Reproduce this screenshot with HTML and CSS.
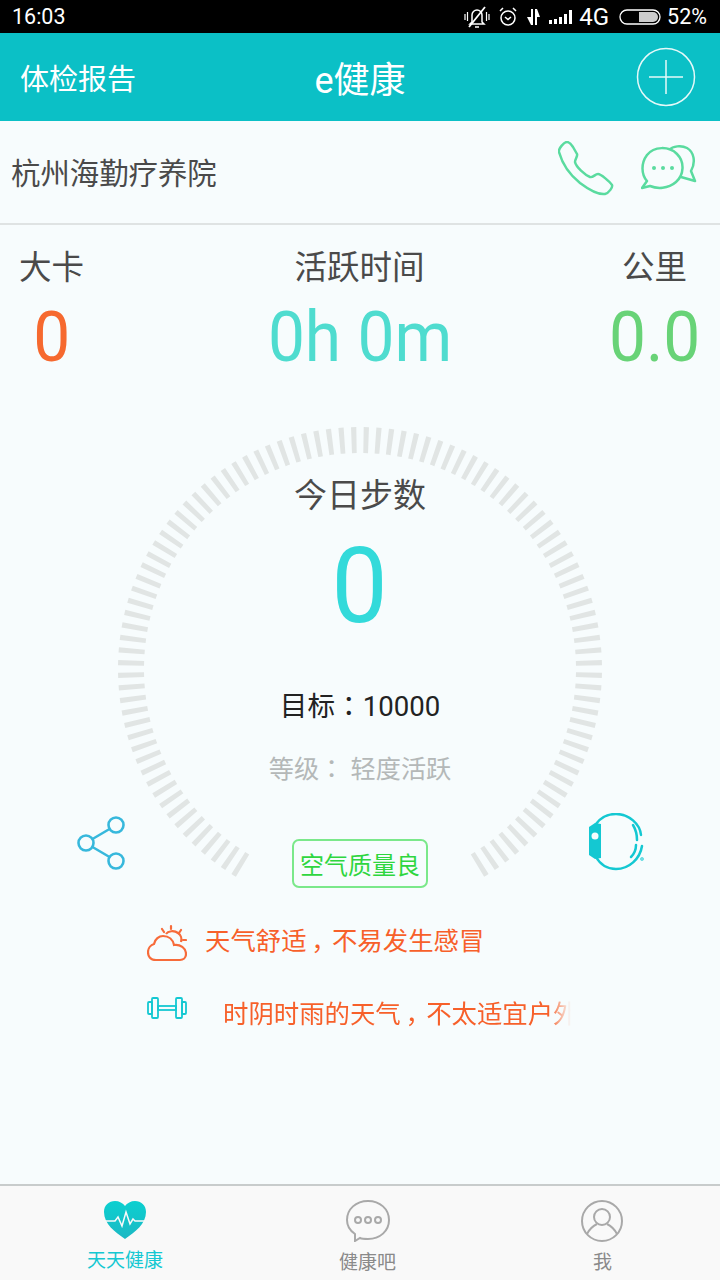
FILE: index.html
```html
<!DOCTYPE html>
<html lang="zh-CN">
<head>
    <meta charset="UTF-8">
    <meta name="viewport" content="width=device-width, initial-scale=1.0">
    <title>e健康</title>
    <link rel="stylesheet" href="styles.css">
</head>

<body>
    <div class="status-bar">
        <span class="status-time">16:03</span>
        <div class="status-right">
            <svg width="26" height="24" viewBox="0 0 26 24" fill="none" stroke="#fff" stroke-width="1.5">
                <path d="M8 17V10a5 5 0 0 1 10 0v7l2 2H6z"/>
                <path d="M11 22h4"/>
                <path d="M21 2L5 22" stroke-width="1.8"/>
                <path d="M1 9v6M3.500 7v9M25 9v6M22.500 7v9" stroke-width="1.2"/>
            </svg>
            <svg width="20" height="22" viewBox="0 0 20 22" fill="none" stroke="#fff" stroke-width="1.5">
                <circle cx="10" cy="12" r="7"/>
                <path d="M7 11l3 2.500 3-2.500"/>
                <path d="M2 5l3-3M18 5l-3-3"/>
            </svg>
            <svg width="15" height="18" viewBox="0 0 15 18" fill="#fff">
                <path d="M5 1h2v16H5L1 9h4z"/>
                <path d="M9 17h2V9h3L11 1H9z"/>
            </svg>
            <svg width="24" height="16" viewBox="0 0 24 16" fill="#fff">
                <rect x="0" y="11" width="3" height="4"/>
                <rect x="5" y="10" width="3" height="5"/>
                <rect x="10" y="8" width="3" height="7"/>
                <rect x="15" y="5" width="3" height="10"/>
                <rect x="20" y="1" width="3" height="14"/>
            </svg>
            <span class="status-net">4G</span>
            <svg class="battery" width="42" height="16" viewBox="0 0 42 16" fill="none">
                <rect x="1" y="1" width="40" height="14" rx="7" stroke="#fff" stroke-width="1.3"/>
                <path d="M20 3h14a5 5 0 0 1 0 10H20z" fill="#ccc"/>
            </svg>
            <span class="status-pct">52%</span>
        </div>
    </div>

    <div class="header">
        <span class="header-left">体检报告</span>
        <span class="header-title">e健康</span>
        <svg class="header-add" width="60" height="60" viewBox="0 0 60 60" fill="none" stroke="#e6f9f9" stroke-width="1.5">
            <circle cx="30" cy="30" r="28.500"/>
            <path d="M30 13v34M13 30h34"/>
        </svg>
    </div>

    <div class="org-row">
        <span class="org-name">杭州海勤疗养院</span>
        <div class="org-actions">
            <svg width="56" height="55" viewBox="0 0 56 55" fill="none" stroke="#5adb9f" stroke-width="2.500" stroke-linejoin="round">
                <path d="M1 11C0 8 6 1 9 1c2 0 4 2 6 5l4 7c1 2-2 5-2 8 1 5 10 13 15 15 3 1 5-3 8-3s12 8 14 11c1 2-3 8-7 9-7 1-17-5-25-11C12 34 4 22 1 11z"/>
            </svg>
            <svg width="56" height="46" viewBox="0 0 56 46" fill="none" stroke="#5adb9f" stroke-width="2.500" stroke-linejoin="round">
                <path d="M28 5c4-4 12-5 18-2 7 4 9 14 4 23l4 10-14-4"/>
                <path d="M1 43l5-7C0 29 0 18 6 10c7-9 22-9 30-1 8 8 7 21-1 28-8 7-19 7-26 4z" fill="#f7fcfd"/>
                <circle cx="13" cy="23" r="2" fill="#5adb9f" stroke="none"/>
                <circle cx="22" cy="23" r="2" fill="#5adb9f" stroke="none"/>
                <circle cx="31" cy="23" r="2" fill="#5adb9f" stroke="none"/>
            </svg>
        </div>
    </div>

    <div class="stats">
        <div class="stat stat-cal">
            <div class="stat-label">大卡</div>
            <div class="stat-value">0</div>
        </div>
        <div class="stat stat-time">
            <div class="stat-label">活跃时间</div>
            <div class="stat-value">0h 0m</div>
        </div>
        <div class="stat stat-km">
            <div class="stat-label">公里</div>
            <div class="stat-value">0.0</div>
        </div>
    </div>

    <div class="gauge">
        <svg class="gauge-ring" width="484" height="460" viewBox="0 0 484 460" fill="none">
            <path d="M127.500 440.300A229 229 0 1 1 356.500 440.300" pathLength="300" stroke="#e1e5e4" stroke-width="26" stroke-dasharray="1.250 1.750" stroke-dashoffset="-0.875"/>
        </svg>
        <div class="gauge-title">今日步数</div>
        <div class="gauge-steps">0</div>
        <div class="gauge-goal">目标<span class="colon" lang="zh-TW">：</span>10000</div>
        <div class="gauge-level">等级<span class="colon" lang="zh-TW">：</span> 轻度活跃</div>
        <svg class="gauge-share" width="50" height="56" viewBox="0 0 50 56" fill="none" stroke="#37b8dc" stroke-width="2.600">
            <circle cx="39" cy="10" r="7.500"/>
            <circle cx="9" cy="28" r="7.500"/>
            <circle cx="39" cy="46" r="7.500"/>
            <path d="M15.500 24l17-10M15.500 32l17 10"/>
        </svg>
        <svg class="gauge-watch" width="56" height="58" viewBox="0 0 56 58" fill="none" stroke="#14c8d2" stroke-width="2.500" stroke-linecap="round">
            <path d="M7 11C12 4 20 1 27 1c13 0 24 10 25 21"/>
            <path d="M53 33C51 46 40 56 27 56c-9 0-16-5-20-12"/>
            <path d="M44 12c3 5 4 10 4 15M47 32c0 4-2 9-5 12"/>
            <path d="M0 14l6-4 6 1v34l-6 1-6-4z" fill="#14c8d2" stroke="none"/>
            <circle cx="6" cy="23" r="3.500" fill="#f7fcfd" stroke="none"/>
            <circle cx="53" cy="46" r="0.500"/>
        </svg>
        <div class="air-badge">空气质量良</div>
    </div>

    <div class="tips">
        <div class="tip">
            <svg width="40" height="38" viewBox="0 0 40 38" fill="none" stroke="#f76b3a" stroke-width="2.200">
                <path d="M9 36C3 36 1 32 1 28c0-4 3-7 6-8 1-5 5-8 9-8 6 0 10 4 11 9 6-1 12 3 12 9 0 4-3 6-6 6z"/>
                <path d="M19 10c2-3 8-4 12-1 3 2 4 6 3 9"/>
                <path d="M24 2v3M15 5l2 3M34 6l-2 3M39 16h-3" stroke-linecap="round"/>
            </svg>
            <span class="tip-text">天气舒适<span class="comma">，</span>不易发生感冒</span>
        </div>
        <div class="tip">
            <svg width="40" height="22" viewBox="0 0 40 22" fill="none" stroke="#14c8d2" stroke-width="1.800">
                <rect x="1" y="5" width="4" height="12" rx="1"/>
                <rect x="5" y="1" width="6" height="20" rx="1"/>
                <rect x="29" y="1" width="6" height="20" rx="1"/>
                <rect x="35" y="5" width="4" height="12" rx="1"/>
                <rect x="11" y="9" width="18" height="4"/>
            </svg>
            <div class="tip-scroll">
                <span class="tip-text">时阴时雨的天气<span class="comma">，</span>不太适宜户外</span>
            </div>
        </div>
    </div>

    <div class="tabbar">
        <div class="tab tab-active">
            <svg width="44" height="40" viewBox="0 0 44 40">
                <defs>
                    <linearGradient id="heartFill" x1="0" y1="0" x2="0" y2="1">
                        <stop offset="0" stop-color="#0bd0d0"/>
                        <stop offset="1" stop-color="#1cb8c4"/>
                    </linearGradient>
                </defs>
                <path d="M22 39C12 32 1 24 1 12 1 5 6 1 12 1c4 0 8 2 10 5 2-3 6-5 10-5 6 0 11 4 11 11 0 12-11 20-21 27z" fill="url(#heartFill)"/>
                <path d="M1 21h11l3-4 4 9 4-14 4 12 3-5 2 2h11" fill="none" stroke="#f9f9f9" stroke-width="1.500"/>
            </svg>
            <span>天天健康</span>
        </div>
        <div class="tab">
            <svg width="44" height="42" viewBox="0 0 44 42" fill="none" stroke="#a9a9a9" stroke-width="2">
                <path d="M9 41l0-7C3 30 1 25 1 20 1 9 10 1 22 1s21 8 21 19-9 19-21 19c-3 0-6 0-8-1z"/>
                <circle cx="12" cy="20" r="3"/>
                <circle cx="22" cy="20" r="3"/>
                <circle cx="32" cy="20" r="3"/>
            </svg>
            <span>健康吧</span>
        </div>
        <div class="tab">
            <svg width="44" height="42" viewBox="0 0 44 42" fill="none" stroke="#a9a9a9" stroke-width="2">
                <circle cx="21" cy="21" r="20"/>
                <circle cx="21" cy="17" r="8"/>
                <path d="M6 34c3-6 8-9 10-10M36 34c-3-6-8-9-10-10"/>
            </svg>
            <span>我</span>
        </div>
    </div>
</body>
</html>
```

FILE: styles.css
```css
* {
    box-sizing: border-box;
}

body {
    font-family: Roboto, "Noto Sans CJK SC", sans-serif;
    margin: 0;
    width: 720px;
    height: 1280px;
    overflow: hidden;
    display: flex;
    flex-direction: column;
    background-color: #f7fcfd;
    color: #4a4a4a;
}

svg {
    display: block;
}

.status-bar {
    height: 33px;
    background-color: #000;
    color: #fff;
    display: flex;
    align-items: center;
    justify-content: space-between;
    padding: 0 13px 0 12px;
    font-size: 21.5px;
    flex-shrink: 0;
}

.status-right {
    display: flex;
    align-items: center;
    gap: 8px;
}

.status-net {
    font-size: 24px;
    margin: 0 2px 0 -2px;
}

.battery {
    margin-right: -2px;
}

.header {
    position: relative;
    height: 88px;
    background-color: #0bc0c6;
    color: #fff;
    display: flex;
    align-items: center;
    justify-content: space-between;
    padding: 0 24px 0 20px;
    flex-shrink: 0;
}

.header-left {
    font-size: 29px;
}

.header-title {
    position: absolute;
    left: 0;
    right: 0;
    text-align: center;
    font-size: 36px;
}

.org-row {
    height: 104px;
    border-bottom: 2px solid #dfe3e3;
    display: flex;
    align-items: center;
    justify-content: space-between;
    padding: 0 23px 0 11px;
    flex-shrink: 0;
}

.org-name {
    font-size: 29.4px;
    padding-bottom: 3px;
}

.org-actions {
    display: flex;
    align-items: center;
    gap: 27px;
    padding-bottom: 8px;
}

.stats {
    display: grid;
    grid-template-columns: 1fr auto 1fr;
    padding: 21px 17px 0 19px;
}

.stat {
    display: flex;
    flex-direction: column;
    align-items: center;
}

.stat-cal {
    justify-self: start;
}

.stat-time {
    margin-left: -3px;
}

.stat-km {
    justify-self: end;
}

.stat-label {
    font-size: 32.5px;
    line-height: 44px;
}

.stat-value {
    margin-top: 9px;
    font-size: 70px;
    line-height: 77px;
    transform: scaleX(0.94);
}

.stat-cal .stat-value {
    color: #f6692f;
}

.stat-time .stat-value {
    color: #4fdccf;
}

.stat-km .stat-value {
    color: #68d377;
}

.gauge {
    position: relative;
    height: 460px;
    margin-top: 51px;
    display: flex;
    flex-direction: column;
    align-items: center;
    padding-top: 46px;
}

.gauge-ring {
    position: absolute;
    left: 118px;
    top: 0;
}

.gauge-title {
    font-size: 33px;
    line-height: 46px;
}

.gauge-steps {
    margin-top: 3px;
    font-size: 105px;
    line-height: 130px;
    color: #33dada;
    transform: scaleX(0.95);
}

.gauge-goal {
    margin-top: 32px;
    font-size: 27.6px;
    line-height: 40px;
    color: #222;
}

.gauge-level {
    margin-top: 20px;
    font-size: 25.2px;
    line-height: 40px;
    color: #b4b8b8;
}

.colon {
    font-family: "Noto Sans CJK TC", sans-serif;
}

.gauge-share {
    position: absolute;
    left: 77px;
    top: 388px;
}

.gauge-watch {
    position: absolute;
    left: 589px;
    top: 386px;
}

.air-badge {
    position: absolute;
    left: 292px;
    top: 412px;
    width: 136px;
    height: 49px;
    border: 2px solid #7be88a;
    border-radius: 7px;
    color: #2fd63f;
    font-size: 24px;
    display: flex;
    align-items: center;
    justify-content: center;
}

.tips {
    margin-top: 37px;
    padding-left: 147px;
    display: flex;
    flex-direction: column;
    gap: 35px;
    flex: 1;
}

.tip {
    display: flex;
    align-items: flex-start;
    gap: 18px;
    color: #f7602a;
    font-size: 25.4px;
    line-height: 35px;
}

.tip-scroll {
    width: 348px;
    margin-left: 18px;
    overflow: hidden;
    white-space: nowrap;
    -webkit-mask-image: linear-gradient(to right, #000 326px, transparent 348px);
    mask-image: linear-gradient(to right, #000 326px, transparent 348px);
}

.comma {
    display: inline-block;
    width: 1em;
    text-align: center;
    font-feature-settings: "palt";
}

.tabbar {
    height: 96px;
    border-top: 2px solid #c8cccc;
    background-color: #f9f9f9;
    display: grid;
    grid-template-columns: 250px 235px 235px;
    flex-shrink: 0;
    padding-top: 14px;
}

.tab {
    display: flex;
    flex-direction: column;
    align-items: center;
    gap: 5px;
    font-size: 19px;
    color: #8a8a8a;
}

.tab-active {
    color: #14c8d2;
}
```
